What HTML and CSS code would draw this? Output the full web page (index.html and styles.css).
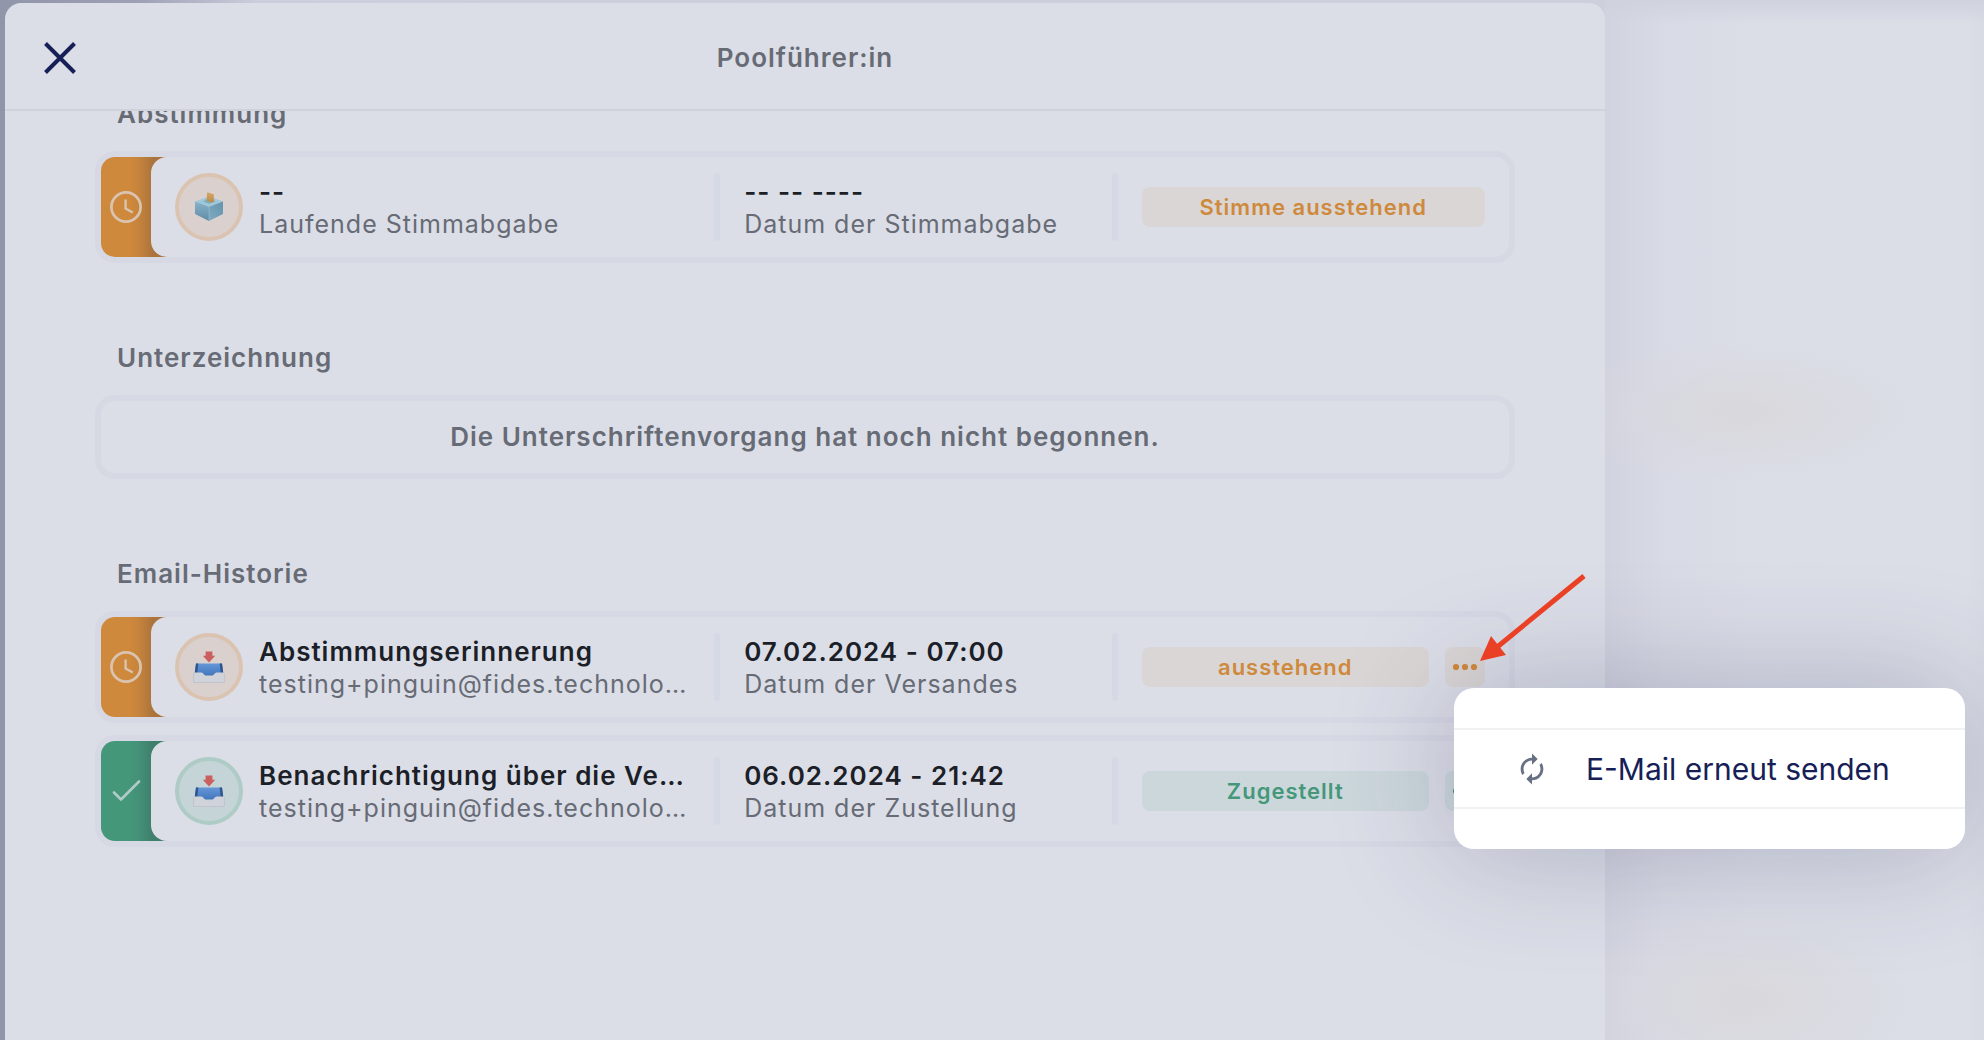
FILE: index.html
```html
<!DOCTYPE html>
<html lang="de">
<head>
    <meta charset="UTF-8">
    <meta name="viewport" content="width=device-width, initial-scale=1.0">
    <title>Poolführer:in</title>
    <link rel="stylesheet" href="styles.css">
</head>
<body>
    <!-- Shared icons -->
    <svg class="sprite" aria-hidden="true">
        <defs>
            <linearGradient id="tray-blue" x1="0" y1="0" x2="0" y2="1">
                <stop offset="0" stop-color="#6596d8"/>
                <stop offset="1" stop-color="#4377bd"/>
            </linearGradient>
            <linearGradient id="box-left" x1="0" y1="0" x2="0" y2="1">
                <stop offset="0" stop-color="#86b3c9"/>
                <stop offset="1" stop-color="#618ba6"/>
            </linearGradient>
            <linearGradient id="box-right" x1="1" y1="0" x2="0" y2="1">
                <stop offset="0" stop-color="#6493ac"/>
                <stop offset="1" stop-color="#7fabc2"/>
            </linearGradient>
            <linearGradient id="box-paper" x1="0" y1="0" x2="0" y2="1">
                <stop offset="0" stop-color="#d4a768"/>
                <stop offset="1" stop-color="#bd8a45"/>
            </linearGradient>
        </defs>
        <symbol id="icon-clock" viewBox="0 0 32 32">
            <circle cx="16" cy="16" r="14.6" fill="none" stroke="currentColor" stroke-width="2.7"/>
            <path d="M15.6 8.5v9l7.2 4" fill="none" stroke="currentColor" stroke-width="2.4"/>
        </symbol>
        <symbol id="icon-check" viewBox="0 0 32 32">
            <path d="M4 17.5l7 7L29 6.5" fill="none" stroke="currentColor" stroke-width="2.7" stroke-linecap="round" stroke-linejoin="round"/>
        </symbol>
        <symbol id="icon-inbox" viewBox="0 0 32 32">
            <path d="M12.6.4h6.8v4.3h2.8L16 11.4 9.8 4.7h2.8z" fill="#cb5f5f"/>
            <path d="M3 12.4h26l1.5 12h-29z" fill="url(#tray-blue)"/>
            <path d="M3 12.4h2.4L4.2 22H1.7zM29 12.400h-2.400L27.800 22h2.500z" fill="#2f568c"/>
            <path d="M.4 21.500h8c2.200 0 3.400 4.800 7.600 4.800s5.400-4.800 7.600-4.800h8V31a1 1 0 0 1-1 1H1.400a1 1 0 0 1-1-1z" fill="#d1d3da"/>
            <path d="M.6 22v9a.6.6 0 0 0 .6.600h29.600a.6.6 0 0 0 .6-.6v-9" fill="none" stroke="#bcbec7" stroke-width=".8"/>
        </symbol>
        <symbol id="icon-ballot" viewBox="0 0 32 32">
            <path d="M2 10.500L16 5.600l14 4.900-14 5.200z" fill="#9cc8da"/>
            <path d="M10 10.200l6-2.200 6.500 2.300-6.500 2.400z" fill="#7eaabd"/>
            <path d="M2 10.500l14 5.200V30L2 23z" fill="url(#box-left)"/>
            <path d="M30 10.500l-14 5.200V30l14-7z" fill="url(#box-right)"/>
            <path d="M16 15.700V30" stroke="#93bccf" stroke-width=".7"/>
            <path d="M14.200 1.200l6.600 2v8.300l-1.300-.5-1 .6-5-2z" fill="url(#box-paper)"/>
        </symbol>
        <symbol id="icon-renew" viewBox="0 0 24 24">
            <path fill="currentColor" d="M12 6v3l4-4-4-4v3c-4.420 0-8 3.580-8 8 0 1.570.46 3.030 1.240 4.260L6.700 14.800c-.45-.83-.7-1.790-.7-2.800 0-3.310 2.690-6 6-6zm6.760 1.740L17.300 9.200c.44.84.7 1.790.7 2.800 0 3.310-2.690 6-6 6v-3l-4 4 4 4v-3c4.420 0 8-3.580 8-8 0-1.570-.46-3.030-1.240-4.260z"/>
        </symbol>
        <symbol id="icon-dots" viewBox="0 0 26 8">
            <g fill="currentColor">
                <circle cx="4" cy="4" r="3.1"/>
                <circle cx="13" cy="4" r="3.1"/>
                <circle cx="22" cy="4" r="3.1"/>
            </g>
        </symbol>
    </svg>

    <main class="panel">
        <header class="panel-header">
            <button type="button" class="close" aria-label="Schliessen">
                <svg viewBox="0 0 32 32"><path d="M1.500 1.500l29 29M30.500 1.500l-29 29" stroke="currentColor" stroke-width="4"/></svg>
            </button>
            <h1>Poolführer:in</h1>
        </header>

        <div class="panel-body">
            <div class="content">
                <section>
                    <h2>Abstimmung</h2>
                    <article class="card pending">
                        <div class="status"><svg><use href="#icon-clock"/></svg></div>
                        <div class="card-content">
                            <div class="subject">
                                <div class="avatar"><svg><use href="#icon-ballot"/></svg></div>
                                <div class="text">
                                    <strong>--</strong>
                                    <span>Laufende Stimmabgabe</span>
                                </div>
                            </div>
                            <div class="divider"></div>
                            <div class="text">
                                <strong>-- -- ----</strong>
                                <span>Datum der Stimmabgabe</span>
                            </div>
                            <div class="divider"></div>
                            <div class="actions">
                                <span class="badge">Stimme ausstehend</span>
                            </div>
                        </div>
                    </article>
                </section>

                <section>
                    <h2>Unterzeichnung</h2>
                    <p class="card empty">Die Unterschriftenvorgang hat noch nicht begonnen.</p>
                </section>

                <section>
                    <h2>Email-Historie</h2>
                    <article class="card pending">
                        <div class="status"><svg><use href="#icon-clock"/></svg></div>
                        <div class="card-content">
                            <div class="subject">
                                <div class="avatar"><svg><use href="#icon-inbox"/></svg></div>
                                <div class="text">
                                    <strong>Abstimmungserinnerung</strong>
                                    <span>testing+pinguin@fides.technology</span>
                                </div>
                            </div>
                            <div class="divider"></div>
                            <div class="text">
                                <strong>07.02.2024 - 07:00</strong>
                                <span>Datum der Versandes</span>
                            </div>
                            <div class="divider"></div>
                            <div class="actions">
                                <span class="badge">ausstehend</span>
                                <button type="button" class="more" aria-label="Mehr"><svg><use href="#icon-dots"/></svg></button>
                            </div>
                        </div>
                    </article>
                    <article class="card done">
                        <div class="status"><svg><use href="#icon-check"/></svg></div>
                        <div class="card-content">
                            <div class="subject">
                                <div class="avatar"><svg><use href="#icon-inbox"/></svg></div>
                                <div class="text">
                                    <strong>Benachrichtigung über die Versendung</strong>
                                    <span>testing+pinguin@fides.technology</span>
                                </div>
                            </div>
                            <div class="divider"></div>
                            <div class="text">
                                <strong>06.02.2024 - 21:42</strong>
                                <span>Datum der Zustellung</span>
                            </div>
                            <div class="divider"></div>
                            <div class="actions">
                                <span class="badge">Zugestellt</span>
                                <button type="button" class="more" aria-label="Mehr"><svg><use href="#icon-dots"/></svg></button>
                            </div>
                        </div>
                    </article>
                </section>
            </div>
        </div>
    </main>

    <div class="menu">
        <button type="button" class="menu-item">
            <svg><use href="#icon-renew"/></svg>
            E-Mail erneut senden
        </button>
    </div>

    <svg class="arrow" viewBox="0 0 110 92" aria-hidden="true">
        <path d="M106 4L18 76" stroke="#ea4025" stroke-width="5"/>
        <path d="M2 89L13 64l15 19z" fill="#ea4025"/>
    </svg>
</body>
</html>
```

FILE: styles.css
```css
* {
    box-sizing: border-box;
}
body {
    position: relative;
    display: flex;
    min-height: 100vh;
    margin: 0;
    padding: 3px 379px 0 5px;
    overflow-x: hidden;
    font-family: Inter, "Liberation Sans", sans-serif;
    font-size: 26px;
    line-height: 32px;
    color: #676b75;
    background:
        linear-gradient(to bottom, #d0d2de, rgba(208, 210, 222, 0) 24px) right top / 379px 100% no-repeat,
        radial-gradient(ellipse 180px 70px at right 240px top 412px, #d9d8dc, rgba(217, 216, 220, 0)),
        radial-gradient(ellipse 180px 90px at right 240px top 1000px, #d9d8dc, rgba(217, 216, 220, 0)),
        linear-gradient(to right, #d1d3df, #d8dae5 60px, #dbdee7 150px, #dbdee7 360px, #d8dbe4) right top / 379px 100% no-repeat,
        linear-gradient(to right, #9195a9, #9ea1b6 140px, #cdcedd 260px, #cdd0dc);
}
h1, h2, p {
    margin: 0;
    font-size: 26px;
    font-weight: 600;
    letter-spacing: 1px;
}
button {
    padding: 0;
    border: none;
    background: none;
    font: inherit;
    cursor: pointer;
}
svg {
    display: block;
}
.sprite {
    position: absolute;
    width: 0;
    height: 0;
}

/* Panel */
.panel {
    flex: 1;
    display: flex;
    flex-direction: column;
    min-width: 0;
    border-radius: 16px 16px 0 0;
    background: #dbdee7;
}
.panel-header {
    display: grid;
    grid-template-columns: 32px 1fr 32px;
    align-items: center;
    height: 108px;
    padding: 4px 39px 0;
    border-bottom: 2px solid #cfd2db;
}
.panel-header h1 {
    text-align: center;
}
.close {
    color: #162056;
}
.close svg {
    width: 32px;
    height: 32px;
}
.panel-body {
    flex: 1;
    overflow: hidden;
    padding: 0 90px;
}
/* List is scrolled a little under the header */
.content {
    margin-top: -13px;
}
section {
    margin-bottom: 79px;
}
h2 {
    margin-bottom: 21px;
    padding-left: 22px;
}

/* Cards */
.card {
    display: flex;
    border: 6px solid #d6d8e4;
    border-radius: 20px;
}
.card + .card {
    margin-top: 12px;
}
.empty {
    justify-content: center;
    padding: 20px;
}
.pending {
    --main: #cf893c;
    --soft: #dad6d5;
    --fill: #dad1cf;
    --ring: #dac4b1;
}
.done {
    --main: #45977a;
    --soft: #ccd7dc;
    --fill: #c5d5d7;
    --ring: #aecbc6;
}
.status {
    display: flex;
    align-items: center;
    width: 66px;
    margin-right: -16px;
    padding-left: 9px;
    border-radius: 14px 0 0 14px;
    background: linear-gradient(to right, transparent 28px, rgba(40, 40, 60, .06) 38px, rgba(40, 40, 60, .22) 52px), var(--main);
    color: var(--ring);
}
.status svg {
    width: 32px;
    height: 32px;
}
.card-content {
    flex: 1;
    display: grid;
    grid-template-columns: 3fr 6px 2fr 6px 2fr;
    column-gap: 24px;
    align-items: center;
    min-width: 0;
    padding: 16px 24px;
    border-radius: 16px;
    background: #dbdee7;
}
.subject {
    display: flex;
    align-items: center;
    gap: 16px;
    min-width: 0;
}
.avatar {
    flex: none;
    display: flex;
    align-items: center;
    justify-content: center;
    width: 68px;
    height: 68px;
    border: 4px solid var(--ring);
    border-radius: 50%;
    background: var(--fill);
}
.avatar svg {
    width: 32px;
    height: 32px;
}
.text {
    min-width: 0;
    padding-top: 2px;
    letter-spacing: 1px;
}
.text strong,
.text span {
    display: block;
    overflow: hidden;
    white-space: nowrap;
    text-overflow: ellipsis;
}
.text strong {
    font-weight: 600;
    color: #1c1f28;
}
.text span {
    font-size: 25px;
}
.divider {
    height: 68px;
    border-radius: 3px;
    background: #d5d8e5;
}
.actions {
    display: flex;
    gap: 16px;
}
.badge {
    flex: 1;
    border-radius: 8px;
    background: var(--soft);
    color: var(--main);
    font-size: 22px;
    font-weight: 600;
    line-height: 40px;
    letter-spacing: 1px;
    text-align: center;
}
.more {
    display: flex;
    align-items: center;
    justify-content: center;
    width: 40px;
    height: 40px;
    border-radius: 8px;
    background: var(--soft);
    color: var(--main);
}
.more svg {
    width: 26px;
    height: 8px;
}

/* Context menu */
.menu {
    position: absolute;
    top: 688px;
    right: 19px;
    width: 511px;
    padding: 40px 0;
    border-radius: 20px;
    background: #fff;
    box-shadow: 0 0 120px rgba(50, 50, 90, .28);
}
.menu-item {
    display: flex;
    align-items: center;
    gap: 37px;
    width: 100%;
    height: 81px;
    padding-left: 61px;
    border: solid #f1f1f2;
    border-width: 2px 0;
    color: #162056;
    font-size: 30px;
}
.menu-item svg {
    width: 34px;
    height: 34px;
    color: #687083;
}
.arrow {
    position: absolute;
    top: 572px;
    right: 396px;
    width: 110px;
    height: 92px;
}
```
